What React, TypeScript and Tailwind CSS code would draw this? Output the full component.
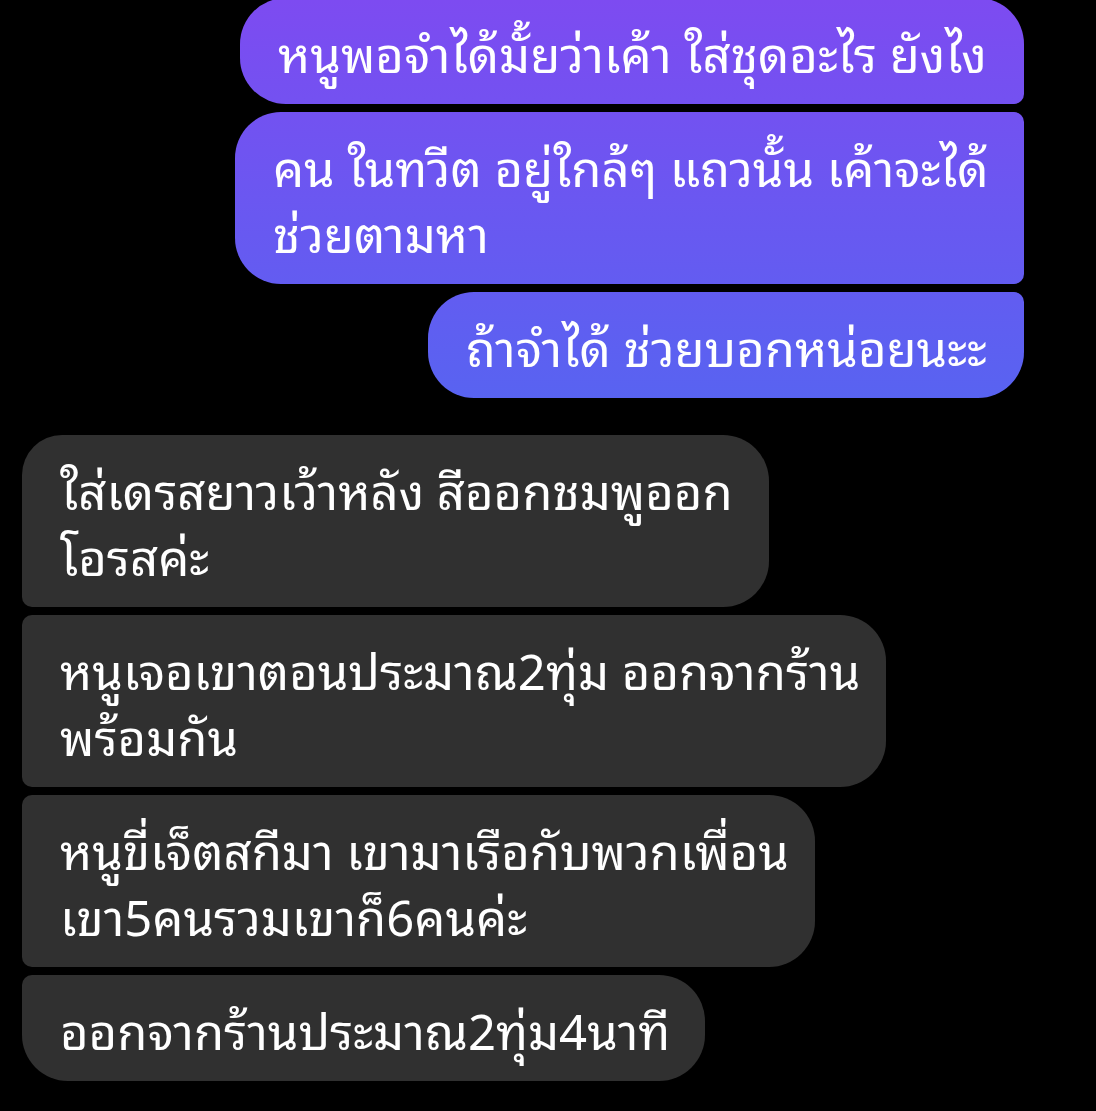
const sent = [
    { text: "หนูพอจำได้มั้ยว่าเค้า ใส่ชุดอะไร ยังไง", w: "w-[784px]", corner: "rounded-l-[46px] rounded-tr-[46px] rounded-br-[10px]" },
    { text: "คน ในทวีต อยู่ใกล้ๆ แถวนั้น เค้าจะได้\nช่วยตามหา", w: "w-[789px]", corner: "rounded-l-[46px] rounded-r-[10px]" },
    { text: "ถ้าจำได้ ช่วยบอกหน่อยนะะ", w: "w-[596px]", corner: "rounded-l-[46px] rounded-tr-[10px] rounded-br-[46px]" },
];

const received = [
    { text: "ใส่เดรสยาวเว้าหลัง สีออกชมพูออก\nโอรสค่ะ", w: "w-[747px]", corner: "rounded-r-[46px] rounded-tl-[40px] rounded-bl-[10px]" },
    { text: "หนูเจอเขาตอนประมาณ2ทุ่ม ออกจากร้าน\nพร้อมกัน", w: "w-[864px]", corner: "rounded-r-[46px] rounded-l-[10px]" },
    { text: "หนูขี่เจ็ตสกีมา เขามาเรือกับพวกเพื่อน\nเขา5คนรวมเขาก็6คนค่ะ", w: "w-[793px]", corner: "rounded-r-[46px] rounded-l-[10px]" },
    { text: "ออกจากร้านประมาณ2ทุ่ม4นาที", w: "w-[683px]", corner: "rounded-r-[46px] rounded-tl-[10px] rounded-bl-[46px]" },
];

const App = () => {
    return (
        <main className="min-h-[1111px] w-full overflow-hidden bg-black font-['Noto_Sans_Thai_Looped','Noto_Sans_Thai','Noto_Sans',sans-serif] text-white">
            {/* Sent messages */}
            <div className="-mt-[2px] flex flex-col items-end gap-2 pr-[72px]">
                {sent.map((m, idx) => (
                    <div
                        key={idx}
                        className={`${m.w} ${m.corner} bg-[linear-gradient(180deg,#7d4bf1_0px,#5863f1_400px)] bg-fixed px-[38px] py-[20px] text-[49px] leading-[66px] whitespace-pre`}
                    >
                        {m.text}
                    </div>
                ))}
            </div>

            {/* Received messages */}
            <div className="mt-[37px] flex flex-col items-start gap-2 pl-[22px]">
                {received.map((m, idx) => (
                    <div
                        key={idx}
                        className={`${m.w} ${m.corner} bg-[#303030] px-[38px] py-[20px] text-[49px] leading-[66px] whitespace-pre`}
                    >
                        {m.text}
                    </div>
                ))}
            </div>
        </main>
    );
};

export default App;
